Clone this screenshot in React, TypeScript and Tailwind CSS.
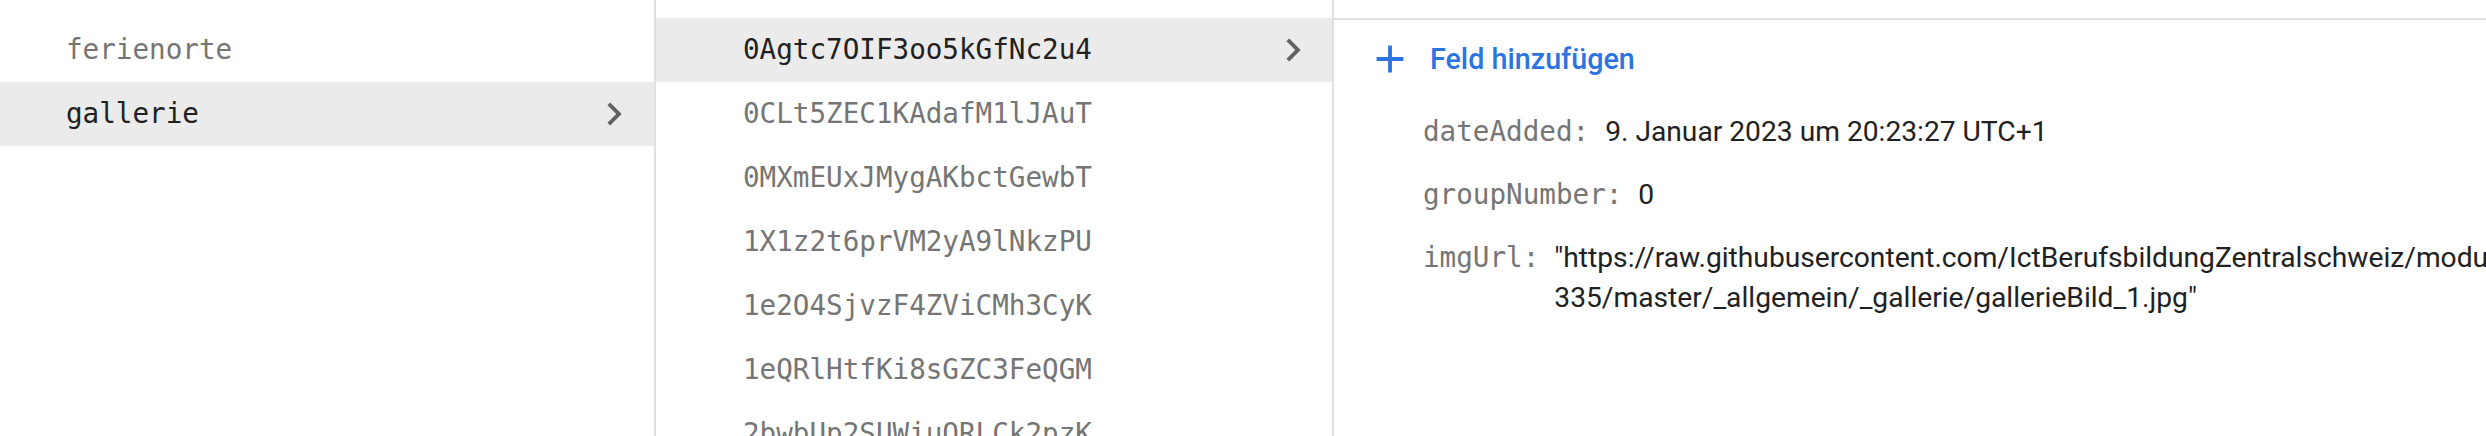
import React from "react";

const mono = { fontFamily: '"DejaVu Sans Mono", "Liberation Mono", monospace' };

function Chevron() {
  return (
    <svg width="46" height="46" viewBox="0 0 24 24" className="shrink-0">
      <path d="M10 6L8.59 7.41 13.17 12l-4.58 4.59L10 18l6-6z" fill="#616161" />
    </svg>
  );
}

function PlusIcon() {
  return (
    <svg width="46" height="46" viewBox="0 0 24 24" className="shrink-0">
      <path d="M19 13h-6v6h-2v-6H5v-2h6V5h2v6h6v2z" fill="#2b74e2" />
    </svg>
  );
}

const collections = [
  { name: "ferienorte", selected: false },
  { name: "gallerie", selected: true },
];

const docs = [
  "0Agtc7OIF3oo5kGfNc2u4",
  "0CLt5ZEC1KAdafM1lJAuT",
  "0MXmEUxJMygAKbctGewbT",
  "1X1z2t6prVM2yA9lNkzPU",
  "1e2O4SjvzF4ZViCMh3CyK",
  "1eQRlHtfKi8sGZC3FeQGM",
  "2bwbUp2SUWiuQRLCk2pzK",
];

export default function App() {
  return (
    <div
      className="flex w-[2486px] h-[436px] overflow-hidden bg-white text-[27.6px]"
      style={{ fontFamily: 'Roboto, "Noto Sans", sans-serif' }}
    >
      {/* Column 1 */}
      <div className="w-[656px] shrink-0 border-r-2 border-[#e0e0e0] pt-[18px] flex flex-col">
        {collections.map((c) => (
          <div
            key={c.name}
            className={`h-[64px] shrink-0 flex items-center justify-between pl-[66px] pr-[17px] ${
              c.selected ? "bg-[#ebebeb] text-[#212121]" : "text-[#757575]"
            }`}
          >
            <span style={mono} className="leading-none">{c.name}</span>
            {c.selected && <Chevron />}
          </div>
        ))}
      </div>

      {/* Column 2 */}
      <div className="w-[678px] shrink-0 border-r-2 border-[#e0e0e0] pt-[18px] flex flex-col">
        {docs.map((d, i) => (
          <div
            key={d}
            className={`h-[64px] shrink-0 flex items-center justify-between pl-[87px] pr-[16px] ${
              i === 0 ? "bg-[#ebebeb] text-[#212121]" : "text-[#757575]"
            }`}
          >
            <span style={mono} className="leading-none">{d}</span>
            {i === 0 && <Chevron />}
          </div>
        ))}
      </div>

      {/* Column 3 */}
      <div className="flex-1 min-w-0 pt-[18px] flex flex-col">
        <div className="border-t-2 border-[#e0e0e0] flex flex-col">
          <div className="mt-[16px] h-[46px] flex items-center pl-[33px] gap-[17px]">
            <PlusIcon />
            <span className="font-medium text-[28.7px] text-[#2b74e2] leading-none">Feld hinzufügen</span>
          </div>
          <div className="mt-[30px] flex flex-col gap-[23px] pl-[89px]">
            <div className="flex items-baseline leading-[40px] whitespace-nowrap">
              <span style={mono} className="text-[#757575] mr-[16px]">dateAdded:</span>
              <span className="text-[#212121] text-[28.2px]">9. Januar 2023 um 20:23:27 UTC+1</span>
            </div>
            <div className="flex items-baseline leading-[40px] whitespace-nowrap">
              <span style={mono} className="text-[#757575] mr-[16px]">groupNumber:</span>
              <span className="text-[#212121] text-[28.2px]">0</span>
            </div>
            <div className="flex items-baseline leading-[40px]">
              <span style={mono} className="text-[#757575] mr-[15px] shrink-0">imgUrl:</span>
              <div className="text-[#212121] text-[28.2px] flex flex-col">
                <span className="whitespace-nowrap">"https://raw.githubusercontent.com/IctBerufsbildungZentralschweiz/modul-m-</span>
                <span className="whitespace-nowrap">335/master/_allgemein/_gallerie/gallerieBild_1.jpg"</span>
              </div>
            </div>
          </div>
        </div>
      </div>
    </div>
  );
}
